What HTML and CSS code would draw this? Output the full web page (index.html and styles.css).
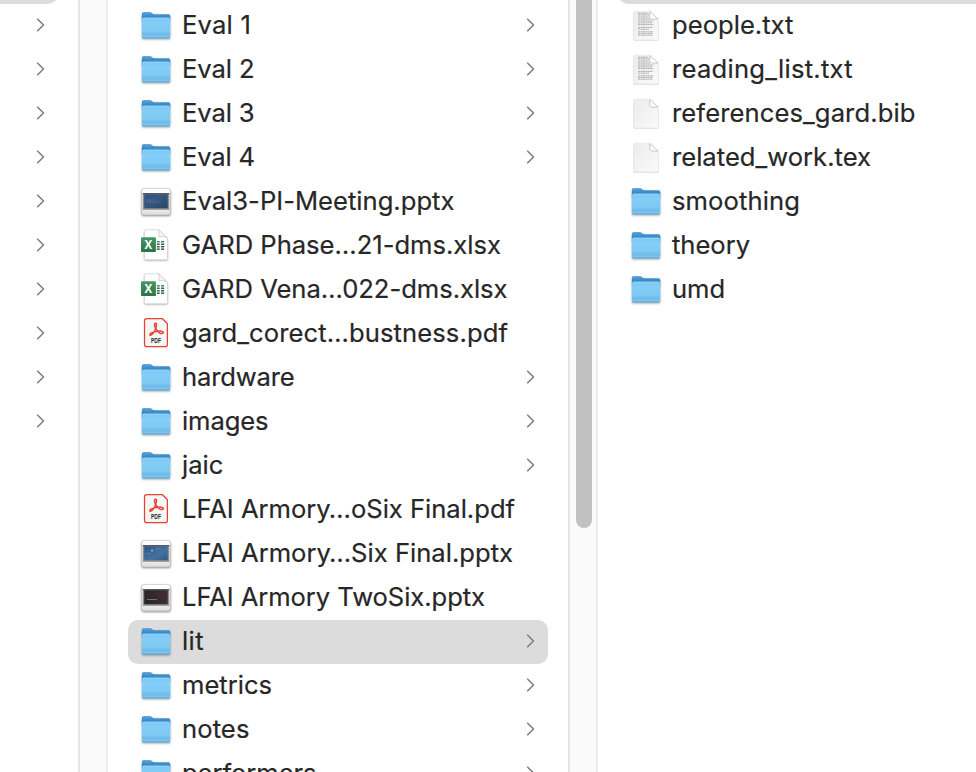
FILE: index.html
```html
<!DOCTYPE html>
<html lang="en">
<head>
<meta charset="utf-8">
<title>Files</title>
<link rel="stylesheet" href="styles.css">
</head>
<body>
<svg class="defs" aria-hidden="true">
  <defs>
    <linearGradient id="folder-back" x2="0" y2="1"><stop offset="0" stop-color="#62abdc"/><stop offset=".3" stop-color="#4390cd"/><stop offset=".6" stop-color="#3384c5"/><stop offset="1" stop-color="#3384c5"/></linearGradient>
    <linearGradient id="folder-front" x2="0" y2="1"><stop offset="0" stop-color="#7bc9f5"/><stop offset=".3" stop-color="#84cdf8"/><stop offset="1" stop-color="#79c4f1"/></linearGradient>
    <linearGradient id="paper" x2="1" y2="1"><stop offset="0" stop-color="#ebebeb"/><stop offset="1" stop-color="#fbfbfb"/></linearGradient>
    <linearGradient id="slide-frame" x2="0" y2="1"><stop offset="0" stop-color="#fff"/><stop offset=".75" stop-color="#f3f3f3"/><stop offset="1" stop-color="#d9d9d9"/></linearGradient>
    <linearGradient id="screen-blue" x2="1" y2="1"><stop offset="0" stop-color="#315481"/><stop offset=".45" stop-color="#35577f"/><stop offset="1" stop-color="#2b4568"/></linearGradient>
    <linearGradient id="screen-light" x2="1" y2="1"><stop offset="0" stop-color="#2e5482"/><stop offset=".6" stop-color="#45719f"/><stop offset="1" stop-color="#315884"/></linearGradient>
    <linearGradient id="screen-dark" x2="1" y2="0"><stop offset="0" stop-color="#26272c"/><stop offset=".55" stop-color="#38272c"/><stop offset="1" stop-color="#3d3032"/></linearGradient>
    <linearGradient id="excel" x2="0" y2="1"><stop offset="0" stop-color="#469767"/><stop offset="1" stop-color="#2d7248"/></linearGradient>
    <symbol id="folder" viewBox="0 0 32 32" overflow="visible">
      <path class="shade" d="M2 5h28.200v23.200q0 1.300-1.300 1.300H3.300Q2 29.500 2 28.200z"/>
      <path fill="url(#folder-back)" d="M1.800 3.900q0-1.900 1.900-1.900h5.400c1.400 0 2 .3 2.900 1.100.9.800 1.500 1.200 2.800 1.200h13.500q1.900 0 1.900 1.900V12H1.800z"/>
      <path fill="url(#folder-front)" d="M1.800 9.600q0-1.900 1.900-1.900h24.600q1.900 0 1.900 1.900v17.200q0 1.400-1.400 1.400H3.200q-1.400 0-1.400-1.400z"/>
      <path fill="none" stroke="#a0dcfb" stroke-width=".7" d="M3 8.100h26"/>
      <path fill="none" stroke="#62b0e0" stroke-width=".7" d="M2 23.200h28M2 25h28"/>
      <path fill="none" stroke="#559bc9" stroke-width=".8" d="M2.300 28h27.400"/>
    </symbol>
    <symbol id="doc" viewBox="0 0 32 32" overflow="visible">
      <path class="shade-soft" d="M3.600 3H18l10.500 9v18.600H3.600z"/>
      <path fill="url(#paper)" stroke="#e2e2e2" stroke-width=".5" d="M5 1.200h14.700l8.700 8v19.300q0 1.400-1.400 1.400H5q-1.400 0-1.400-1.400V2.600q0-1.400 1.400-1.400z"/>
      <path fill="#fff" stroke="#b5b5b5" stroke-width=".7" d="M19.800 1.500v5.900q0 1.600 1.600 1.600h6.700z"/>
    </symbol>
    <symbol id="text" viewBox="0 0 32 32" overflow="visible">
      <use href="#doc"/>
      <g fill="none" stroke="#a3a3a3" stroke-width=".85" stroke-dasharray="2.200 .3 1.300 .3 3 .4">
        <path d="M8 3.200h10M8 4.900h11M8 7h10.500M8 9h12M8 11h15.500M8 12.800h14M8 14.600h15.500M8 17.400h15M8 19.200h11M8 21.800h15.500M8 23.400h14.500M8 25.200h15"/>
      </g>
    </symbol>
    <symbol id="frame" viewBox="0 0 32 32" overflow="visible">
      <rect class="shade-dark" x="1.600" y="4" width="29" height="26" rx="2"/>
      <rect x="1.700" y="2.400" width="28.600" height="26.600" rx="2.200" fill="url(#slide-frame)" stroke="#c3c3c3" stroke-width=".7"/>
      <rect x="2.700" y="7" width="26.600" height="16.800" fill="#8c8d8f"/>
      <path fill="#55585d" d="M2.700 7h26.600v1.200H2.700z"/>
    </symbol>
    <symbol id="slides-blue" viewBox="0 0 32 32" overflow="visible"><use href="#frame"/><path fill="url(#screen-blue)" d="M4.200 8.200h23.600v14H4.200z"/><path stroke="#6482a3" stroke-width=".7" stroke-dasharray="2 .6" d="M6.500 14h8M6.500 16h14"/></symbol>
    <symbol id="slides-light" viewBox="0 0 32 32" overflow="visible"><use href="#frame"/><path fill="url(#screen-light)" d="M4.200 8.200h23.600v14H4.200z"/><circle cx="12" cy="12.500" r="1" fill="#9fc1da"/><path stroke="#6a93b8" stroke-width=".7" d="M6 15.700h5M15 11h6"/></symbol>
    <symbol id="slides-dark" viewBox="0 0 32 32" overflow="visible"><use href="#frame"/><path fill="url(#screen-dark)" d="M4.200 8.200h23.600v14H4.200z"/><path stroke="#858585" stroke-width=".8" d="M7 17.500h10"/><path stroke="#4d3438" stroke-width=".7" d="M15 11.500h9M18 14h7"/></symbol>
    <symbol id="xlsx" viewBox="0 0 32 32" overflow="visible">
      <path class="shade" d="M4.500 1H17l10.500 10v19.500h-23z"/>
      <path fill="#fff" stroke="#d0d0d0" stroke-width=".7" d="M6-.3h12.500l9 8.500v20q0 1.600-1.600 1.600H6q-1.600 0-1.600-1.600V1.300Q4.400-.3 6-.3z"/>
      <path fill="#f6f6f6" stroke="#c4c4c4" stroke-width=".7" d="M18.500-.3c1 2 .5 4.800.2 6.800 2.500 0 6.800-.2 8.800 1.700z"/>
      <path fill="#42875e" d="M16.900 11h2.800v1.600h-2.800zm4.100 0h3.200v1.600H21z"/>
      <path fill="#276b46" d="M16.900 13.600h2.800v1.500h-2.800zm4.100 0h3.200v1.500H21zM16.900 16.100h2.800v1.400h-2.800zm4.100 0h3.200v1.400H21z"/>
      <path fill="#193e2c" d="M16.900 18.500h2.800v1.200h-2.800zm4.100 0h3.200v1.200H21z"/>
      <rect x="1" y="7.200" width="14.900" height="14.800" rx="1" fill="url(#excel)"/>
      <text class="x-label" x="8.400" y="18.500">X</text>
    </symbol>
    <symbol id="pdf" viewBox="0 0 32 32" overflow="visible">
      <path fill="#f6f6f6" stroke="#e8402f" stroke-width="1.250" d="M6.700.7h15.800l4.900 5v20.800q0 2.200-2.200 2.200H6.700q-2.200 0-2.200-2.200V2.900Q4.500.7 6.700.7z"/>
      <path fill="none" stroke="#e8402f" stroke-width="1.450" stroke-linejoin="round" d="M15.500 5.200c-1.700 0-1.100 3.100.3 5.400 1.500 2.600 4 5 6 5 2.400-.2 1.800-2.700-1.900-2.600-3.300.1-7.100 1-8.900 2.100-2.200 1.400-1.100 3.100.6 1.700 2-1.700 4-5.600 4.700-8.700.4-1.700.1-2.900-.8-2.900z"/>
      <text class="pdf-label" x="16" y="25" textLength="10" lengthAdjust="spacingAndGlyphs">PDF</text>
    </symbol>
    <symbol id="chevron" viewBox="0 0 10 14"><path class="chevron-line" d="M1.700 1.200 7.500 7l-5.800 5.800"/></symbol>
  </defs>
</svg>
<main class="browser">
  <section class="column column-parent" id="parent"></section>
  <div class="divider"></div>
  <section class="column column-main" id="files"></section>
  <div class="divider"><div class="scroll-thumb"></div></div>
  <section class="column column-child" id="children"></section>
</main>
<script src="script.js"></script>
</body>
</html>
```
FILE: styles.css
```css
* { box-sizing: border-box; }

body {
  margin: 0;
  background: #fff;
  color: #272727;
  font-family: Inter, "Liberation Sans", sans-serif;
  font-size: 25.6px;
}

.defs { position: absolute; width: 0; height: 0; }

.browser {
  display: grid;
  grid-template-columns: 78px 30px 460px 30px 1fr;
  height: 772px;
  overflow: hidden;
}

.column { height: 772px; overflow: hidden; }
.column-parent { padding-right: 20px; }
.column-main { padding: 4px 20px 0; }
.column-child { padding-left: 20px; }

.column-parent .row:first-child,
.column-child .row:first-child { margin-top: -40px; }

.row {
  display: flex;
  align-items: center;
  height: 44px;
  padding-left: 12px;
}

.row.selected { background: #dcdcdc; border-radius: 10px; }
.column-parent .selected { border-radius: 0 10px 10px 0; }
.column-child .selected { border-radius: 10px 0 0 10px; }

.icon { flex: none; width: 32px; height: 32px; overflow: visible; }

.name {
  margin-left: 10px;
  line-height: 42px;
  height: 44px;
  white-space: pre;
  -webkit-text-stroke: 0.2px #272727;
}

.chevron {
  flex: none;
  width: 10px;
  height: 14px;
  margin: 0 12px 2px auto;
}

.chevron-line { fill: none; stroke: #808080; stroke-width: 1.6; stroke-linecap: round; stroke-linejoin: round; }

.divider {
  background: #fafafa;
  border-left: 2px solid #e5e5e5;
  border-right: 2px solid #ececec;
}

.scroll-thumb {
  width: 16px;
  height: 528px;
  margin-left: 6px;
  background: #c1c1c1;
  border-radius: 0 0 8px 8px;
}

.shade { fill: #000; opacity: .35; filter: blur(.8px); }
.shade-soft { fill: #000; opacity: .2; filter: blur(.7px); }
.shade-dark { fill: #000; opacity: .5; filter: blur(.8px); }

.x-label { fill: #fff; font: bold 11.5px "Open Sans", sans-serif; text-anchor: middle; }
.pdf-label { fill: #222; font: bold 7px "Liberation Sans", sans-serif; text-anchor: middle; }
```
FILE: script.js
```js
// Each entry: icon, file name, width of the label, whether it opens a column.
const files = [
  ["folder", "Eval 1", 69, true],
  ["folder", "Eval 2", 72.5, true],
  ["folder", "Eval 3", 72.5, true],
  ["folder", "Eval 4", 73, true],
  ["slides-blue", "Eval3-PI-Meeting.pptx", 272.5],
  ["xlsx", "GARD Phase…21-dms.xlsx", 319],
  ["xlsx", "GARD Vena…022-dms.xlsx", 325.5],
  ["pdf", "gard_corect…bustness.pdf", 326],
  ["folder", "hardware", 112.5, true],
  ["folder", "images", 86.5, true],
  ["folder", "jaic", 41.5, true],
  ["pdf", "LFAI Armory…oSix Final.pdf", 333],
  ["slides-light", "LFAI Armory…Six Final.pptx", 331],
  ["slides-dark", "LFAI Armory TwoSix.pptx", 303],
  ["folder", "lit", 22, true, true],
  ["folder", "metrics", 90, true],
  ["folder", "notes", 67.5, true],
  ["folder", "performers", 134.5, true]
];
const children = [
  [null, "", 0, false, true],
  ["text", "people.txt", 121.5],
  ["text", "reading_list.txt", 181],
  ["doc", "references_gard.bib", 243.5],
  ["doc", "related_work.tex", 199],
  ["folder", "smoothing", 128],
  ["folder", "theory", 78],
  ["folder", "umd", 53]
];
const parent = Array.from({ length: 11 }, (_, i) => [null, "", 0, i > 0, i === 0]);

function fill(id, rows) {
  const column = document.getElementById(id);
  for (const [icon, name, width, opens, selected] of rows) {
    const row = document.createElement("div");
    row.className = selected ? "row selected" : "row";
    if (icon) row.innerHTML = `<svg class="icon"><use href="#${icon}"/></svg><span class="name"></span>`;
    if (opens) row.insertAdjacentHTML("beforeend", '<svg class="chevron"><use href="#chevron"/></svg>');
    column.append(row);
    if (!icon) continue;
    const label = row.querySelector(".name");
    label.textContent = name;
    const natural = label.getBoundingClientRect().width;
    label.style.letterSpacing = `${(width - natural) / name.length}px`;
  }
}

fill("parent", parent);
fill("files", files);
fill("children", children);
```
